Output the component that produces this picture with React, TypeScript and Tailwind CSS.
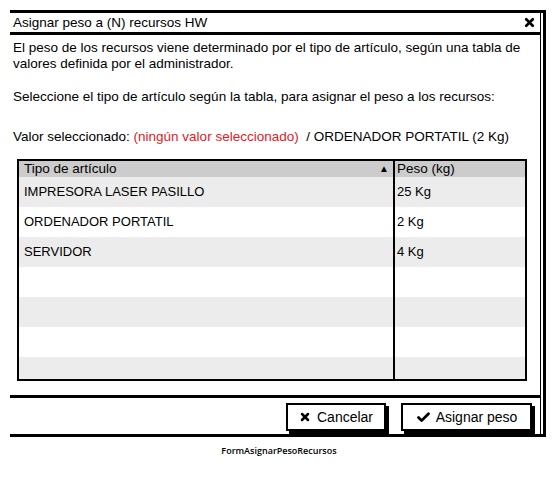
import { X, Check } from 'lucide-react'

const rows = [
  { tipo: 'IMPRESORA LASER PASILLO', peso: '25 Kg' },
  { tipo: 'ORDENADOR PORTATIL', peso: '2 Kg' },
  { tipo: 'SERVIDOR', peso: '4 Kg' },
  { tipo: '', peso: '' },
  { tipo: '', peso: '' },
  { tipo: '', peso: '' },
  { tipo: '', peso: '' },
]

export default function App() {
  return (
    <div className="w-[557px] h-[493px] bg-white pt-[10px] pl-[10px] text-black font-['Liberation_Sans',Arial,sans-serif]">
      {/* Window */}
      <div className="w-[536px] border-t-[3px] border-b-[3px] border-r-[3px] border-black">
        <div className="mr-[2px] border-r border-black">
          {/* Title bar */}
          <div className="h-[22px] flex items-center justify-between pl-[3px] pr-[4px] border-b-[3px] border-black">
            <span className="text-[13.5px] leading-[16px]">Asignar peso a (N) recursos HW</span>
            <X className="w-[13px] h-[13px]" strokeWidth={5} />
          </div>

          {/* Body */}
          <div className="pl-[3px] pt-[5px] text-[13.5px] leading-[16px]">
            <p>
              El peso de los recursos viene determinado por el tipo de artículo, según una tabla de
              <br />
              valores definida por el administrador.
            </p>
            <p className="mt-[17px]">
              Seleccione el tipo de artículo según la tabla, para asignar el peso a los recursos:
            </p>
            <p className="mt-[24px]">
              Valor seleccionado: <span className="text-[#e0201f]">(ningún valor seleccionado)</span>
              &nbsp; / ORDENADOR PORTATIL (2 Kg)
            </p>
          </div>

          {/* Table */}
          <div className="ml-[7px] mt-[14px] w-[510px] h-[222px] border-2 border-black overflow-hidden">
            <div className="flex h-[16px] bg-[#cccccc] text-[13.5px] leading-[16px]">
              <div className="w-[376px] pl-[5px] pr-[4px] flex items-center justify-between border-r-2 border-black">
                <span>Tipo de artículo</span>
                <span className="text-[10px]">▲</span>
              </div>
              <div className="flex-1 pl-[2px]">Peso (kg)</div>
            </div>
            {rows.map((r, i) => (
              <div
                key={i}
                className={`flex h-[30px] text-[13px] leading-[16px] ${i % 2 === 0 ? 'bg-[#ececec]' : 'bg-white'}`}
              >
                <div className="w-[376px] pl-[5px] pb-[1px] flex items-center border-r-2 border-black">{r.tipo}</div>
                <div className="flex-1 pl-[2px] pb-[1px] flex items-center">{r.peso}</div>
              </div>
            ))}
          </div>

          {/* Footer */}
          <div className="mt-[14px] border-t-[3px] border-black h-[39px] flex items-start justify-end gap-[15px] pt-[5px] pr-[8px]">
            <button className="w-[100px] h-[28px] border-2 border-black bg-white shadow-[3px_3px_0_0_#000] flex items-center justify-center gap-[6px] text-[14px]">
              <X className="w-[12px] h-[12px]" strokeWidth={5} />
              <span>Cancelar</span>
            </button>
            <button className="w-[131px] h-[28px] border-2 border-black bg-white shadow-[3px_3px_0_0_#000] flex items-center justify-center gap-[5px] text-[14px]">
              <Check className="w-[15px] h-[15px]" strokeWidth={4.5} />
              <span>Asignar peso</span>
            </button>
          </div>
        </div>
      </div>

      {/* Caption */}
      <div className="w-[538px] mt-[7px] text-center text-[9px] font-semibold font-['Open_Sans',sans-serif]">
        FormAsignarPesoRecursos
      </div>
    </div>
  )
}
